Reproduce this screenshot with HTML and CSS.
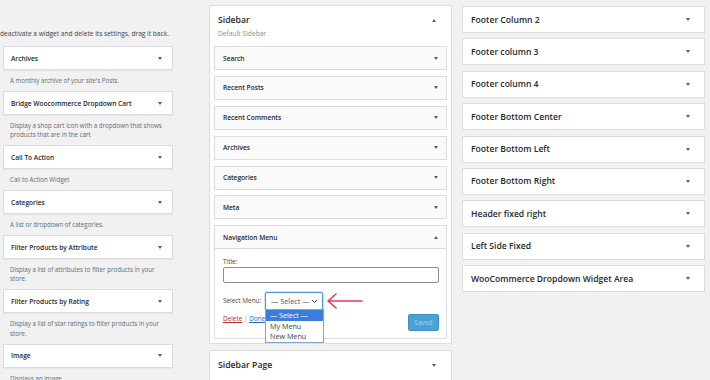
FILE: index.html
```html
<!DOCTYPE html>
<html lang="en">
<head>
  <meta charset="UTF-8"/>
  <title>Widgets</title>
  <link rel="stylesheet" href="styles.css">
</head>
<body>
  <div class="page">

    <!-- Available widgets -->
    <div class="col-left">
      <p class="intro">deactivate a widget and delete its settings, drag it back.</p>

      <div class="widget"><span class="widget-title">Archives</span><span class="caret"></span></div>
      <p class="widget-desc">A monthly archive of your site's Posts.</p>

      <div class="widget"><span class="widget-title">Bridge Woocommerce Dropdown Cart</span><span class="caret"></span></div>
      <p class="widget-desc">Display a shop cart icon with a dropdown that shows products that are in the cart</p>

      <div class="widget"><span class="widget-title">Call To Action</span><span class="caret"></span></div>
      <p class="widget-desc">Call to Action Widget</p>

      <div class="widget"><span class="widget-title">Categories</span><span class="caret"></span></div>
      <p class="widget-desc">A list or dropdown of categories.</p>

      <div class="widget"><span class="widget-title">Filter Products by Attribute</span><span class="caret"></span></div>
      <p class="widget-desc">Display a list of attributes to filter products in your store.</p>

      <div class="widget"><span class="widget-title">Filter Products by Rating</span><span class="caret"></span></div>
      <p class="widget-desc">Display a list of star ratings to filter products in your store.</p>

      <div class="widget"><span class="widget-title">Image</span><span class="caret"></span></div>
      <p class="widget-desc">Displays an image.</p>
    </div>

    <!-- Sidebar areas -->
    <div class="col-mid">
      <div class="sidebar">
        <div class="sidebar-head">
          <h2>Sidebar</h2>
          <span class="caret up"></span>
        </div>
        <p class="sidebar-desc">Default Sidebar</p>

        <div class="inner-widget"><div class="inner-top"><span>Search</span><span class="caret"></span></div></div>
        <div class="inner-widget"><div class="inner-top"><span>Recent Posts</span><span class="caret"></span></div></div>
        <div class="inner-widget"><div class="inner-top"><span>Recent Comments</span><span class="caret"></span></div></div>
        <div class="inner-widget"><div class="inner-top"><span>Archives</span><span class="caret"></span></div></div>
        <div class="inner-widget"><div class="inner-top"><span>Categories</span><span class="caret"></span></div></div>
        <div class="inner-widget"><div class="inner-top"><span>Meta</span><span class="caret"></span></div></div>

        <div class="inner-widget open">
          <div class="inner-top"><span>Navigation Menu</span><span class="caret up"></span></div>
          <div class="inner-body">
            <label class="field-label">Title:</label>
            <div class="text-input"></div>

            <div class="select-row">
              <span class="field-label">Select Menu:</span>
              <div class="select">
                <span>— Select —</span>
                <svg class="chev" width="7" height="5" viewBox="0 0 7 5"><path d="M1 1l2.5 2.5L6 1" fill="none" stroke="#3c434a" stroke-width="1"/></svg>
                <ul class="options">
                  <li class="active">— Select —</li>
                  <li>My Menu</li>
                  <li>New Menu</li>
                </ul>
              </div>
              <svg class="pointer" width="38" height="18" viewBox="0 0 38 18">
                <path d="M2 9h34M2 9l8-7M2 9l8 7" fill="none" stroke="#e8375c" stroke-width="1.6" stroke-linecap="round"/>
              </svg>
            </div>

            <div class="actions">
              <span class="links"><a class="del">Delete</a> | <a class="done">Done</a></span>
              <button class="saved">Saved</button>
            </div>
          </div>
        </div>
      </div>

      <div class="sidebar closed">
        <div class="sidebar-head">
          <h2>Sidebar Page</h2>
          <span class="caret"></span>
        </div>
      </div>
    </div>

    <!-- Other areas -->
    <div class="col-right">
      <div class="area"><span>Footer Column 2</span><span class="caret"></span></div>
      <div class="area"><span>Footer column 3</span><span class="caret"></span></div>
      <div class="area"><span>Footer column 4</span><span class="caret"></span></div>
      <div class="area"><span>Footer Bottom Center</span><span class="caret"></span></div>
      <div class="area"><span>Footer Bottom Left</span><span class="caret"></span></div>
      <div class="area"><span>Footer Bottom Right</span><span class="caret"></span></div>
      <div class="area"><span>Header fixed right</span><span class="caret"></span></div>
      <div class="area"><span>Left Side Fixed</span><span class="caret"></span></div>
      <div class="area"><span>WooCommerce Dropdown Widget Area</span><span class="caret"></span></div>
    </div>

  </div>
</body>
</html>
```

FILE: styles.css
```css
body {
  margin: 0;
  background: #f1f1f1;
  font-family: 'Open Sans', 'Noto Sans', sans-serif;
  color: #23282d;
  overflow: hidden;
}

.page {
  display: flex;
  align-items: flex-start;
}

.caret {
  width: 0;
  height: 0;
  border-left: 2.5px solid transparent;
  border-right: 2.5px solid transparent;
  border-top: 3px solid #555d66;
}

.caret.up {
  border-top: none;
  border-bottom: 3px solid #555d66;
}

/* Left column */
.col-left {
  width: 170px;
  margin-left: 3px;
  padding-top: 28px;
}

.intro {
  margin: 0 0 6px -3px;
  font-size: 6.6px;
  line-height: 12px;
  color: #3c434a;
  white-space: nowrap;
}

.widget {
  box-sizing: border-box;
  height: 24px;
  display: flex;
  align-items: center;
  justify-content: space-between;
  padding: 0 10px 0 7px;
  background: #fff;
  border: 1px solid #dcdcde;
  box-shadow: 0 1px 1px rgba(0,0,0,0.04);
}

.widget-title {
  font-size: 6.6px;
  font-weight: 600;
}

.widget-desc {
  margin: 0;
  padding: 6px 8px 5.8px 7px;
  font-size: 6.2px;
  line-height: 9.2px;
  color: #646970;
}

/* Middle column */
.col-mid {
  width: 243px;
  margin-left: 36px;
  margin-top: 5px;
}

.sidebar {
  box-sizing: border-box;
  background: #fff;
  border: 1px solid #dcdcde;
  padding: 0 4px 4px;
  position: relative;
}

.sidebar-head {
  display: flex;
  align-items: center;
  justify-content: space-between;
  padding: 8px 11px 0 4px;
}

.sidebar-head h2 {
  margin: 0;
  font-size: 8.7px;
  font-weight: 600;
  line-height: 13px;
}

.sidebar-desc {
  margin: 2px 0 7px 4px;
  font-size: 6.7px;
  line-height: 10px;
  color: #8c8f94;
}

.inner-widget {
  background: #fafafa;
  border: 1px solid #dcdcde;
  margin-bottom: 5.9px;
}

.inner-widget:last-child {
  margin-bottom: 0;
}

.inner-top {
  box-sizing: border-box;
  height: 22px;
  display: flex;
  align-items: center;
  justify-content: space-between;
  padding: 0 8px 0 8px;
  font-size: 6.6px;
  font-weight: 600;
}

.open .inner-top {
  height: 23px;
  border-bottom: 1px solid #dcdcde;
}

.inner-body {
  background: #fff;
  padding: 8px 7px 7px 8px;
}

.field-label {
  display: block;
  font-size: 6.4px;
  line-height: 10px;
  color: #3c434a;
}

.text-input {
  box-sizing: border-box;
  height: 16px;
  border: 1px solid #8c8f94;
  border-radius: 2px;
  background: #fff;
}

.select-row {
  position: relative;
  display: flex;
  align-items: center;
  margin-top: 9px;
}

.select-row .field-label {
  width: 42px;
}

.select {
  position: relative;
  box-sizing: border-box;
  width: 58px;
  height: 18px;
  display: flex;
  align-items: center;
  justify-content: space-between;
  padding: 0 4px 0 5px;
  border: 1px solid #4f94d4;
  border-radius: 2px;
  box-shadow: 0 0 0 1px rgba(79,148,212,0.25);
  font-size: 7.3px;
  color: #50575e;
  background: #fff;
}

.options {
  position: absolute;
  left: -1px;
  top: 16px;
  width: 57px;
  margin: 0;
  padding: 0;
  list-style: none;
  background: #fff;
  border: 1px solid #7ea6d4;
  z-index: 2;
}

.options li {
  height: 10.5px;
  line-height: 10.5px;
  padding-left: 4px;
  font-size: 7.2px;
  color: #3c434a;
}

.options li.active {
  background: #3b7ddd;
  color: #fff;
}

.pointer {
  position: absolute;
  left: 103px;
  top: 0;
}

.actions {
  display: flex;
  justify-content: space-between;
  align-items: flex-start;
  margin-top: 4px;
}

.links {
  font-size: 6.4px;
  line-height: 10px;
  color: #8c8f94;
}

.links a {
  text-decoration: underline;
}

.links .del {
  color: #b32d2e;
}

.links .done {
  color: #2271b1;
}

.saved {
  box-sizing: border-box;
  width: 31px;
  height: 17px;
  padding: 0;
  background: #4ba0d6;
  border: 1px solid #3b91c8;
  border-radius: 2px;
  color: #a8d4ef;
  font-family: inherit;
  font-size: 6.6px;
}

.sidebar.closed {
  margin-top: 6px;
  height: 34px;
  padding-bottom: 0;
}

.sidebar.closed .sidebar-head {
  padding-top: 8px;
}

/* Right column */
.col-right {
  width: 243px;
  margin-left: 10px;
  margin-top: 6px;
}

.area {
  box-sizing: border-box;
  height: 27px;
  display: flex;
  align-items: center;
  justify-content: space-between;
  padding: 0 14px 0 8px;
  margin-bottom: 5.4px;
  background: #fff;
  border: 1px solid #dcdcde;
  font-size: 8.6px;
  font-weight: 600;
}
```
